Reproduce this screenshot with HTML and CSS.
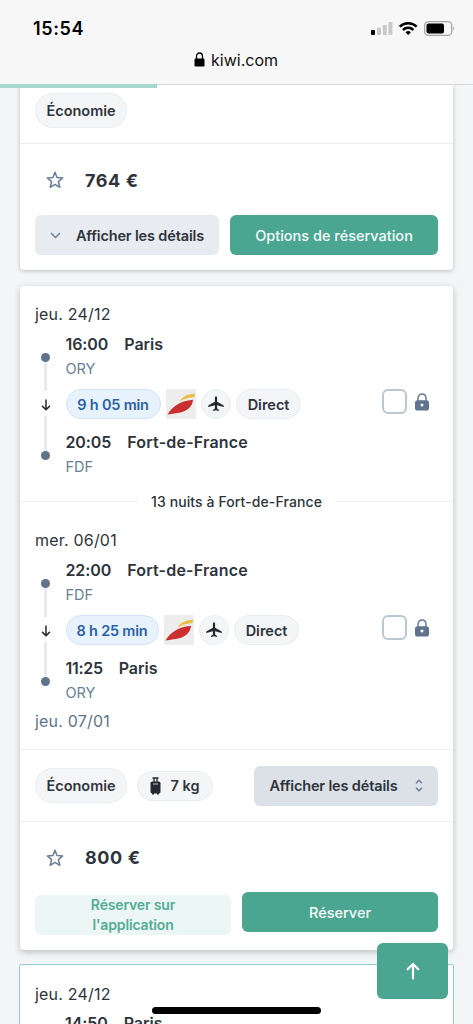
FILE: index.html
```html
<!DOCTYPE html>
<html lang="fr">
<head>
<meta charset="utf-8">
<title>kiwi.com</title>
<link rel="stylesheet" href="styles.css">
</head>
<body>
<svg width="0" height="0" class="defs">
  <symbol id="star" viewBox="0 0 18 18"><path d="M9 1.300l2 5.300 5.700.300-4.300 3.700 1.400 5.700L9 13.300l-4.800 3 1.400-5.700L1.300 6.900 7 6.600z" fill="none" stroke="#697d95" stroke-width="1.500" stroke-linejoin="round"/></symbol>
  <symbol id="down" viewBox="0 0 10 12"><path d="M5 .5v10.200M1.100 6.900L5 10.800l3.900-3.900" fill="none" stroke="#252a31" stroke-width="1.500"/></symbol>
  <symbol id="plane" viewBox="0 0 16 16"><path d="M8 .3c.8 0 1.100.9 1.100 1.800v3.600l6.300 3.600c.3.2.4.5.4 1v.7L9.100 9.200v3.300l1.900 1.400v1.200L8 14.300l-3 .8v-1.200l1.900-1.400V9.200L.2 11v-.7c0-.5.1-.8.4-1l6.300-3.600V2.100C6.900 1.200 7.200.3 8 .3z" fill="#252a31"/></symbol>
  <symbol id="airline" viewBox="0 0 30 30"><rect width="30" height="30" rx="1.500" fill="#ededed"/><path d="M13.500 12.500C17 7.500 21 5 29 4.700c0 1.800-.4 2.900-1.200 3.600C25 8.300 19 9.500 13.500 12.500z" fill="#eebc40"/><path d="M1.500 25.500C6 18.500 13 12 27 10.800c-.5 5.500-4 10-10 11.900C12 24.200 7 24.500 1.500 25.500z" fill="#c9302f"/></symbol>
  <symbol id="lock" viewBox="0 0 14 18"><path d="M3 8V5.400C3 2.700 4.700 1 7 1s4 1.700 4 4.400V8" fill="none" stroke="#697d95" stroke-width="1.500"/><rect y="7.300" width="14" height="10.200" rx="2.600" fill="#5f738c"/><circle cx="7" cy="12.100" r="1.500" fill="#fff"/></symbol>
</svg>

<header class="browser">
  <div class="status">
    <span class="clock">15:54</span>
    <svg class="signals" width="86" height="16" viewBox="0 0 86 16">
      <rect x="1" y="9" width="4" height="5" rx="1" fill="#000"/>
      <rect x="7" y="6.500" width="4" height="7.500" rx="1" fill="#c8c9ca"/>
      <rect x="12.800" y="4" width="4" height="10" rx="1" fill="#c8c9ca"/>
      <rect x="18.400" y="1" width="4" height="13" rx="1" fill="#c8c9ca"/>
      <g fill="none" stroke="#000" stroke-width="2.500"><path d="M29.700 5.600a12.200 12.200 0 0 1 17 0"/><path d="M33 9a7.400 7.400 0 0 1 10.400 0"/></g>
      <path d="M35.500 11.300a4 4 0 0 1 5.400 0L38.200 14z"/>
      <rect x="54.700" y=".7" width="27" height="13.600" rx="3.600" fill="none" stroke="#a5a6a7" stroke-width="1.300"/>
      <rect x="56.500" y="2.500" width="17.500" height="10" rx="2"/>
      <path d="M83 5.300q2 2.200 0 4.400z" fill="#a5a6a7"/>
    </svg>
  </div>
  <div class="address">
    <svg width="11" height="15" viewBox="0 0 11 15"><path d="M2.500 7V4.500a3 3.500 0 0 1 6 0V7" fill="none" stroke="#000" stroke-width="1.300"/><rect x=".5" y="6.500" width="10" height="8" rx="1.200"/></svg>
    <span>kiwi.com</span>
  </div>
  <div class="progress"></div>
</header>

<main class="results">
  <section class="card first">
    <div class="chips"><span class="chip">Économie</span></div>
    <div class="price-row"><svg width="18" height="18"><use href="#star"/></svg><b>764 €</b></div>
    <div class="actions">
      <button class="btn light"><svg width="11" height="7" viewBox="0 0 11 7"><path d="M1 1l4.500 4.500L10 1" fill="none" stroke="#697d95" stroke-width="1.400"/></svg><span>Afficher les détails</span></button>
      <button class="btn green options">Options de réservation</button>
    </div>
  </section>

  <section class="card trip">
    <div class="date">jeu. 24/12</div>
    <div class="leg">
      <div class="track"><i class="dot"></i><i class="line"></i><svg width="10" height="12"><use href="#down"/></svg><i class="line long"></i><i class="dot"></i></div>
      <div class="stops">
        <div class="stop"><span class="hour">16:00</span><span>Paris</span></div>
        <div class="code">ORY</div>
        <div class="tags"><span class="tag time">9 h 05 min</span><svg width="30" height="30"><use href="#airline"/></svg><span class="tag round"><svg width="16" height="16"><use href="#plane"/></svg></span><span class="tag direct">Direct</span></div>
        <div class="stop"><span class="hour">20:05</span><span class="city">Fort-de-France</span></div>
        <div class="code">FDF</div>
      </div>
      <div class="keep"><i class="box"></i><svg width="14" height="18"><use href="#lock"/></svg></div>
    </div>
    <div class="nights"><span>13 nuits à Fort-de-France</span></div>
    <div class="date second">mer. 06/01</div>
    <div class="leg">
      <div class="track"><i class="dot"></i><i class="line"></i><svg width="10" height="12"><use href="#down"/></svg><i class="line long"></i><i class="dot"></i></div>
      <div class="stops">
        <div class="stop"><span class="hour">22:00</span><span class="city">Fort-de-France</span></div>
        <div class="code">FDF</div>
        <div class="tags"><span class="tag time short">8 h 25 min</span><svg width="30" height="30"><use href="#airline"/></svg><span class="tag round"><svg width="16" height="16"><use href="#plane"/></svg></span><span class="tag direct">Direct</span></div>
        <div class="stop"><span class="hour narrow">11:25</span><span>Paris</span></div>
        <div class="code">ORY</div>
      </div>
      <div class="keep"><i class="box"></i><svg width="14" height="18"><use href="#lock"/></svg></div>
    </div>
    <div class="date arrival">jeu. 07/01</div>
    <div class="summary">
      <span class="chip">Économie</span>
      <span class="tag bag"><svg width="11" height="18" viewBox="0 0 11 18"><path d="M2.500 1h6M4 1v4M7 1v4" fill="none" stroke="#252a31" stroke-width="1.300"/><rect x=".5" y="4.500" width="10" height="12" rx="1.800" fill="#252a31"/><path d="M2 16h2v1.500H2zM7 16h2v1.500H7z" fill="#252a31"/><path d="M3 7h5" stroke="#c9ced4"/></svg>7 kg</span>
      <button class="btn mid"><span>Afficher les détails</span><svg width="8" height="13" viewBox="0 0 8 13"><path d="M1 4.300L4 1.300l3 3M1 8.700l3 3 3-3" fill="none" stroke="#697d95" stroke-width="1.400"/></svg></button>
    </div>
    <div class="price-row bordered"><svg width="18" height="18"><use href="#star"/></svg><b>800 €</b></div>
    <div class="actions booking">
      <button class="btn pale">Réserver sur<br>l'application</button>
      <button class="btn green book">Réserver</button>
    </div>
  </section>

  <section class="card next">
    <div class="date">jeu. 24/12</div>
    <div class="stop"><span class="hour">14:50</span><span>Paris</span></div>
  </section>
</main>

<button class="to-top"><svg width="14" height="18" viewBox="0 0 14 18"><path d="M7 16.500V2.500M1.700 7.300L7 2l5.300 5.300" fill="none" stroke="#fff" stroke-width="2.200" stroke-linecap="round" stroke-linejoin="round"/></svg></button>
<div class="home-bar"></div>
</body>
</html>
```
FILE: styles.css
```css
* { box-sizing: border-box; }
body { margin: 0; height: 1024px; overflow: hidden; position: relative; background: #f4f5f7; color: #2e343b; font-family: Inter, "Liberation Sans", sans-serif; }
svg { flex: none; display: block; }
button { border: 0; font: inherit; padding: 0; }
.defs { position: absolute; }

.browser { height: 88px; background: linear-gradient(#f7f7f7 84px, #d5d6d7 84px, #d5d6d7 85px, transparent 85px); display: flex; flex-direction: column; position: relative; z-index: 2; }
.status { height: 49px; padding: 20px 17px 0 33px; display: flex; justify-content: space-between; align-items: flex-start; }
.clock { font-size: 18px; line-height: 18px; font-weight: 600; letter-spacing: .6px; color: #000; }
.signals { margin-top: 1px; }
.address { height: 35px; display: flex; gap: 6px; justify-content: center; padding: 3px 1px 0 0; font-size: 16px; line-height: 17px; color: #111; }
.progress { height: 4px; width: 157px; background: #a4d8ce; }

.results { margin-top: -3px; padding: 0 20px; display: flex; flex-direction: column; }
.card { background: #fff; border-radius: 4px; box-shadow: 0 1px 4px rgba(37,42,49,.28); }
.first { height: 185px; border-radius: 0 0 4px 4px; }
.chips { height: 59px; padding: 8px 15px; border-bottom: 1px solid #ecedef; }
.chip { display: flex; align-items: center; justify-content: center; width: 92px; height: 35px; border: 1px solid #e8edf1; border-radius: 18px; background: #f4f5f7; font-size: 14.5px; font-weight: 600; }
.price-row { height: 71px; display: flex; align-items: center; gap: 21px; padding: 1px 0 0 26px; font-size: 18px; }
.price-row b { font-weight: 700; letter-spacing: .6px; }
.actions { display: flex; justify-content: space-between; padding: 0 15px; }
.btn { height: 40px; border-radius: 6px; display: flex; align-items: center; justify-content: center; font-size: 14.5px; font-weight: 600; letter-spacing: -.15px; color: #2e343b; }
.light { width: 184px; background: #e8ebf0; gap: 15px; }
.green { background: #4ba691; color: #f4fbf9; font-weight: 500; letter-spacing: 0; }
.options { width: 208px; }

.trip { margin-top: 16px; height: 664px; padding-top: 16px; box-shadow: 0 2px 6px rgba(37,42,49,.28); }
.date { height: 25px; padding-left: 15px; line-height: 25px; font-size: 16px; letter-spacing: .2px; }
.leg { display: flex; padding: 5px 15px 0 21px; height: 154px; }
.track { width: 9px; padding-top: 21px; display: flex; flex-direction: column; align-items: center; }
.dot { width: 9px; height: 9px; border-radius: 50%; background: #5f738c; flex: none; }
.line { width: 3px; height: 29px; background: #e8ecf0; }
.track svg { margin: 8px 0 5px; }
.line.long { height: 35px; }
.stops { flex: 1; padding-left: 15.5px; }
.stop { height: 25px; line-height: 25px; display: flex; gap: 16px; font-size: 16px; font-weight: 600; }
.hour { letter-spacing: -.1px; }
.hour.narrow { letter-spacing: -.3px; }
.city { letter-spacing: .2px; }
.code { height: 24px; line-height: 24px; font-size: 14.5px; color: #697d95; }
.tags { height: 30px; margin: 8px 0 11px; display: flex; gap: 5.2px; }
.tag { height: 30px; border: 1px solid #e8edf1; border-radius: 15px; background: #f4f5f7; display: flex; align-items: center; justify-content: center; font-size: 14.5px; font-weight: 600; white-space: nowrap; }
.time { width: 95px; background: #e8f2fc; border-color: #d0e4f6; color: #2d61a6; letter-spacing: -.2px; }
.time.short { width: 93px; }
.round { width: 30px; }
.direct { width: 65px; }
.keep { align-self: flex-start; margin-top: 57px; display: flex; align-items: center; gap: 8px; padding-right: 9px; }
.box { width: 25px; height: 25px; border: 2px solid #bac7d5; border-radius: 6px; }
.nights { height: 41px; display: flex; align-items: center; gap: 14px; font-size: 14px; font-weight: 500; letter-spacing: .1px; white-space: nowrap; }
.nights::before, .nights::after { content: ""; flex: 1; height: 1px; background: #eceef1; }
.date.second { margin-top: 6px; }
.arrival { margin-top: 2px; color: #5f738c; }
.summary { margin-top: 15px; height: 73px; border: solid #ecedef; border-width: 1px 0; padding: 0 15px; display: flex; align-items: center; }
.bag { width: 76px; margin-left: 10px; gap: 9px; }
.mid { width: 184px; background: #dce1e8; margin-left: auto; gap: 17px; }
.price-row.bordered { height: 70px; }
.booking { align-items: flex-start; }
.pale { width: 196px; margin-top: 3px; background: #ecf6f4; color: #51ad96; line-height: 20px; font-size: 14px; }
.book { width: 196px; }
.next { margin: 14px -1px 0; height: 100px; border: 1.5px solid #8fccd6; box-shadow: none; border-radius: 2px; padding-top: 17px; }
.next .stop { padding: 0 0 0 45px; margin-top: 4px; }

.to-top { position: absolute; left: 377px; top: 943px; width: 71px; height: 56px; border-radius: 6px; background: #4ba691; display: flex; align-items: center; justify-content: center; }
.home-bar { position: absolute; left: 152px; top: 1007px; width: 169px; height: 7px; border-radius: 4px; background: #000; }
```
